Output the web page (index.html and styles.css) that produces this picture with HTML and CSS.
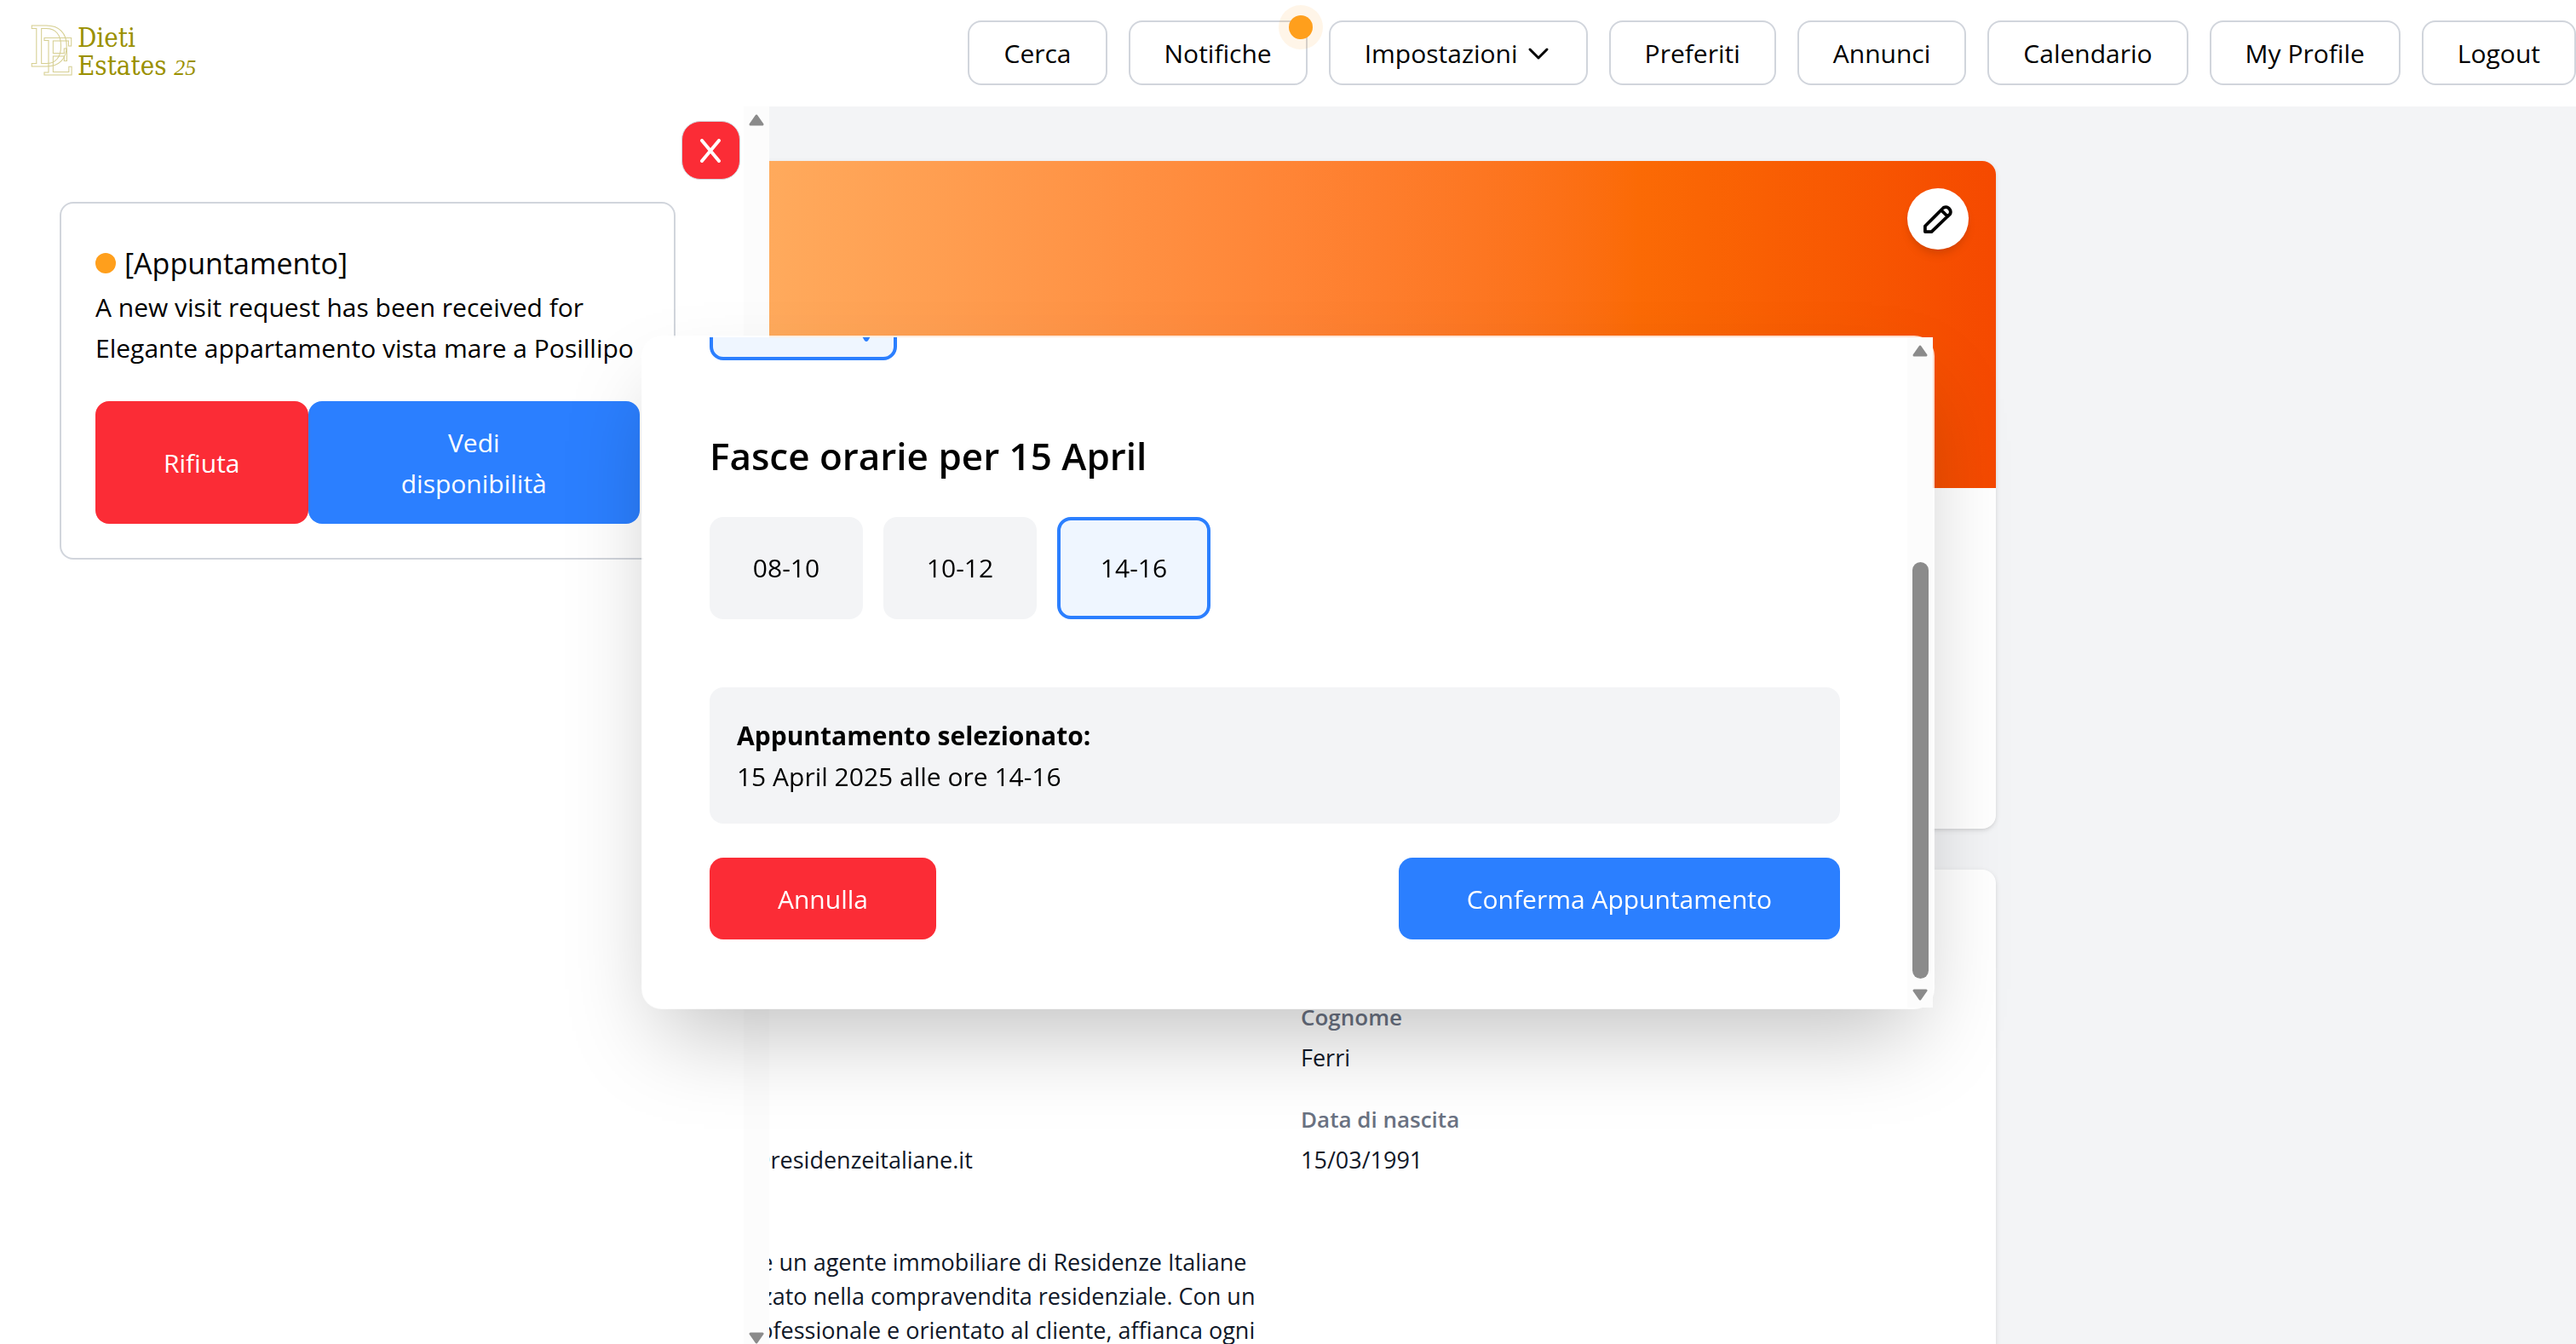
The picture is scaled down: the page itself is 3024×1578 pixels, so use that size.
FILE: index.html
```html
<!DOCTYPE html>
<html lang="it">
<head>
<meta charset="utf-8">
<title>DietiEstates25</title>
<link rel="stylesheet" href="styles.css">
</head>
<body>
<header class="header">
  <a class="logo" href="#" aria-label="Dieti Estates 25">
    <svg class="monogram" viewBox="0 0 53 66" aria-hidden="true">
      <text class="mono-e" x="15" y="59">E</text>
      <text class="mono-d" x="0" y="49">D</text>
    </svg>
    <span class="wordmark"><span>Dieti</span><span>Estates <em>25</em></span></span>
  </a>
  <nav class="nav">
    <button class="nav-btn">Cerca</button>
    <button class="nav-btn">Notifiche<span class="badge"></span></button>
    <button class="nav-btn">Impostazioni
      <svg class="chevron" viewBox="0 0 32 32" aria-hidden="true"><path d="M6 11l10 10l10-10"/></svg>
    </button>
    <button class="nav-btn">Preferiti</button>
    <button class="nav-btn">Annunci</button>
    <button class="nav-btn">Calendario</button>
    <button class="nav-btn">My Profile</button>
    <button class="nav-btn">Logout</button>
  </nav>
</header>

<div class="stage">
  <main class="profile">
    <section class="card">
      <div class="banner">
        <button class="edit" aria-label="Modifica">
          <svg viewBox="0 0 36 36" aria-hidden="true"><path d="M2 34V27L25 4a6 6 0 0 1 8 8L10 34zM22 7l7 7"/></svg>
        </button>
      </div>
      <div class="summary"></div>
    </section>
    <section class="card details">
      <dl class="fields">
        <div><dt>Nome</dt><dd>Gianluca</dd></div>
        <div><dt>Cognome</dt><dd>Ferri</dd></div>
        <div><dt>Email</dt><dd>gianluca_ferri@residenzeitaliane.it</dd></div>
        <div><dt>Data di nascita</dt><dd>15/03/1991</dd></div>
        <div><dt>Bio</dt><dd>Gianluca Ferri è un agente immobiliare di Residenze Italiane<br>e ben specializzato nella compravendita residenziale. Con un<br>andamento professionale e orientato al cliente, affianca ogni</dd></div>
      </dl>
    </section>
  </main>

  <aside class="sidebar">
    <div class="sidebar-body">
      <button class="close" aria-label="Chiudi">
        <svg viewBox="0 0 26 28" aria-hidden="true"><path d="M3 2l20 24M23 2L3 26"/></svg>
      </button>
      <article class="notice">
        <h2 class="notice-title"><span class="dot"></span>[Appuntamento]</h2>
        <p>A new visit request has been received for Elegante appartamento vista mare a Posillipo</p>
        <div class="notice-actions">
          <button class="btn danger">Rifiuta</button>
          <button class="btn primary">Vedi disponibilità</button>
        </div>
      </article>
    </div>
    <div class="scrollbar">
      <svg class="arrow" viewBox="0 0 18 14" aria-hidden="true"><path d="M9 2l7 10H2z"/></svg>
      <svg class="arrow" viewBox="0 0 18 14" aria-hidden="true"><path d="M9 12l7-10H2z"/></svg>
    </div>
  </aside>
</div>

<div class="overlay">
  <div class="modal" role="dialog" aria-label="Fasce orarie">
    <div class="modal-body">
      <button class="slot day selected" aria-label="15 April">
        <svg viewBox="0 0 24 24" aria-hidden="true"><path d="M0 6h24L14 23q-2 2-4 0z"/></svg>
      </button>
      <h2 class="modal-title">Fasce orarie per 15 April</h2>
      <div class="slots">
        <button class="slot">08-10</button>
        <button class="slot">10-12</button>
        <button class="slot selected">14-16</button>
      </div>
      <div class="chosen">
        <strong>Appuntamento selezionato:</strong>
        <span>15 April 2025 alle ore 14-16</span>
      </div>
      <div class="modal-actions">
        <button class="btn danger">Annulla</button>
        <button class="btn primary">Conferma Appuntamento</button>
      </div>
    </div>
    <div class="scrollbar modal-scrollbar">
      <svg class="arrow" viewBox="0 0 18 14" aria-hidden="true"><path d="M9 2l7 10H2z"/></svg>
      <span class="thumb"></span>
      <svg class="arrow" viewBox="0 0 18 14" aria-hidden="true"><path d="M9 12l7-10H2z"/></svg>
    </div>
  </div>
</div>
</body>
</html>
```
FILE: styles.css
```css
* { box-sizing: border-box; margin: 0; }

body {
  height: 100vh;
  display: flex;
  flex-direction: column;
  overflow: hidden;
  background: #f3f4f6;
  color: #000;
  font: 30px/48px "Open Sans", "Noto Sans", sans-serif;
}

button { font: inherit; color: inherit; cursor: pointer; }

/* Header */
.header {
  flex: none;
  display: flex;
  justify-content: space-between;
  align-items: center;
  padding: 24px 0 25px;
  background: #fff;
}
.logo {
  display: flex;
  align-items: center;
  padding-left: 34px;
  gap: 4px;
  color: #9a9000;
  text-decoration: none;
}
.monogram { width: 53px; height: 66px; overflow: visible; }
.monogram text {
  font-family: "DejaVu Serif Condensed", "DejaVu Serif", serif;
  fill: #fff;
  stroke: #d6cf92;
  stroke-width: 1;
}
.monogram .mono-d { font-size: 66px; fill: none; }
.monogram .mono-e { font-size: 60px; }
.wordmark {
  display: flex;
  flex-direction: column;
  font: 31px/33px "DejaVu Serif Condensed", "DejaVu Serif", serif;
}
.wordmark em { font: italic 26px/32px "Liberation Serif", serif; }

.nav { display: flex; gap: 25px; }
.nav-btn {
  position: relative;
  display: flex;
  align-items: center;
  gap: 8px;
  padding: 13px 40px 11px;
  border: 2px solid #d1d5dc;
  border-radius: 16px;
  background: #fff;
}
.badge {
  position: absolute;
  top: -8px;
  right: -8px;
  width: 28px;
  height: 28px;
  border-radius: 50%;
  background: #ff9f1c;
  box-shadow: 0 0 0 12px rgba(255, 159, 28, .1);
}
.chevron { width: 32px; height: 32px; fill: none; stroke: #000; stroke-width: 3; stroke-linecap: round; stroke-linejoin: round; }

/* Page below the header */
.stage { position: relative; flex: 1; min-height: 0; padding-right: 18px; overflow: hidden; }
.profile {
  display: flex;
  flex-direction: column;
  gap: 48px;
  width: 1680px;
  max-width: 90vw;
  margin: 64px auto 0;
}
.card {
  overflow: hidden;
  border-radius: 16px;
  background: #fff;
  box-shadow: 0 2px 6px rgba(0, 0, 0, .1), 0 2px 4px -2px rgba(0, 0, 0, .1);
}
.banner {
  display: flex;
  justify-content: flex-end;
  height: 384px;
  padding: 32px;
  background: linear-gradient(to right in oklab, #ffb86a, #ff8536 50%, #fb6a05 75%, #f54900);
}
.edit {
  display: grid;
  place-items: center;
  width: 72px;
  height: 72px;
  border: 0;
  border-radius: 50%;
  background: #fff;
  box-shadow: 0 8px 12px -2px rgba(0, 0, 0, .1), 0 4px 8px -4px rgba(0, 0, 0, .1);
}
.edit svg { width: 34px; height: 34px; fill: none; stroke: #000; stroke-width: 4; stroke-linejoin: round; }
.summary { height: 400px; }
.details { padding: 153px 48px 48px; }
.fields {
  display: grid;
  grid-template-columns: 1fr 1fr;
  gap: 32px 48px;
  font-size: 27px;
  line-height: 40px;
}
.fields dt { color: #6a7282; font-size: 26px; font-weight: 600; }
.fields dd { margin-top: 8px; color: #101828; white-space: nowrap; }

/* Notification drawer */
.sidebar {
  position: absolute;
  inset: 0 auto 0 0;
  display: flex;
  width: 29.86%;
  background: #fff;
}
.sidebar-body { flex: 1; display: flex; flex-direction: column; gap: 26px; padding: 17px 4px 0 70px; }
.close {
  align-self: flex-end;
  display: grid;
  place-items: center;
  width: 69px;
  height: 69px;
  border: 1px solid #d1d5dc;
  border-radius: 22px;
  background: #fb2c36;
}
.close svg { width: 26px; height: 28px; fill: none; stroke: #fff; stroke-width: 4; stroke-linecap: round; }
.notice {
  margin-right: 76px;
  padding: 40px;
  border: 2px solid #d1d5dc;
  border-radius: 16px;
}
.notice-title { display: flex; align-items: center; gap: 10px; font-size: 34px; line-height: 60px; font-weight: 400; }
.notice p { margin-top: -2px; }
.dot { width: 24px; height: 24px; border-radius: 50%; background: #ff9f1c; }
.notice-actions { display: flex; margin-top: 38px; }
.notice-actions .primary { flex: 1; }

.btn { padding: 25px 80px 23px; border: 0; border-radius: 16px; color: #fff; }
.danger { background: #fb2c36; }
.primary { background: #2b7fff; }

.scrollbar {
  flex: none;
  display: flex;
  flex-direction: column;
  align-items: center;
  justify-content: space-between;
  width: 30px;
  padding: 9px 0 0;
  background: #fcfcfc;
}
.modal-scrollbar { padding-bottom: 8px; }
.arrow { width: 18px; height: 14px; fill: #8b8b8b; stroke: #8b8b8b; stroke-width: 3; stroke-linejoin: round; }
.thumb { width: 19px; height: 489px; margin-top: auto; margin-bottom: 12px; border-radius: 10px; background: #8b8b8b; }

/* Appointment dialog */
.overlay { position: fixed; inset: 0; display: grid; place-items: center; }
.modal {
  display: flex;
  width: 50.2vw;
  height: calc(50vh + 2px);
  border: 2px solid rgba(255, 255, 255, .8);
  border-radius: 24px;
  background: #fff;
  background-clip: padding-box;
  box-shadow: 0 50px 100px -24px rgba(0, 0, 0, .25);
}
.modal-body {
  flex: 1;
  display: flex;
  flex-direction: column;
  justify-content: flex-end;
  overflow: hidden;
  padding: 80px 79px 80px 78px;
}
.slots { display: flex; gap: 24px; margin: 40px 0 80px; }
.slot {
  width: 180px;
  padding: 32px;
  border: 4px solid #f3f4f6;
  border-radius: 16px;
  background: #f3f4f6;
  line-height: 48px;
}
.slot.selected { border-color: #2b7fff; background: #eff6ff; }
.day {
  flex: none;
  align-self: flex-start;
  display: flex;
  justify-content: flex-end;
  align-items: flex-end;
  width: 220px;
  height: 120px;
  padding: 0 20px 18px;
}
.day svg { width: 24px; height: 24px; fill: #2b7fff; }
.modal-title { margin-top: 80px; font-size: 44px; line-height: 64px; font-weight: 600; }
.chosen {
  display: flex;
  flex-direction: column;
  padding: 33px 32px 31px;
  border-radius: 16px;
  background: #f3f4f6;
}
.modal-actions { display: flex; justify-content: space-between; margin-top: 40px; }
```
